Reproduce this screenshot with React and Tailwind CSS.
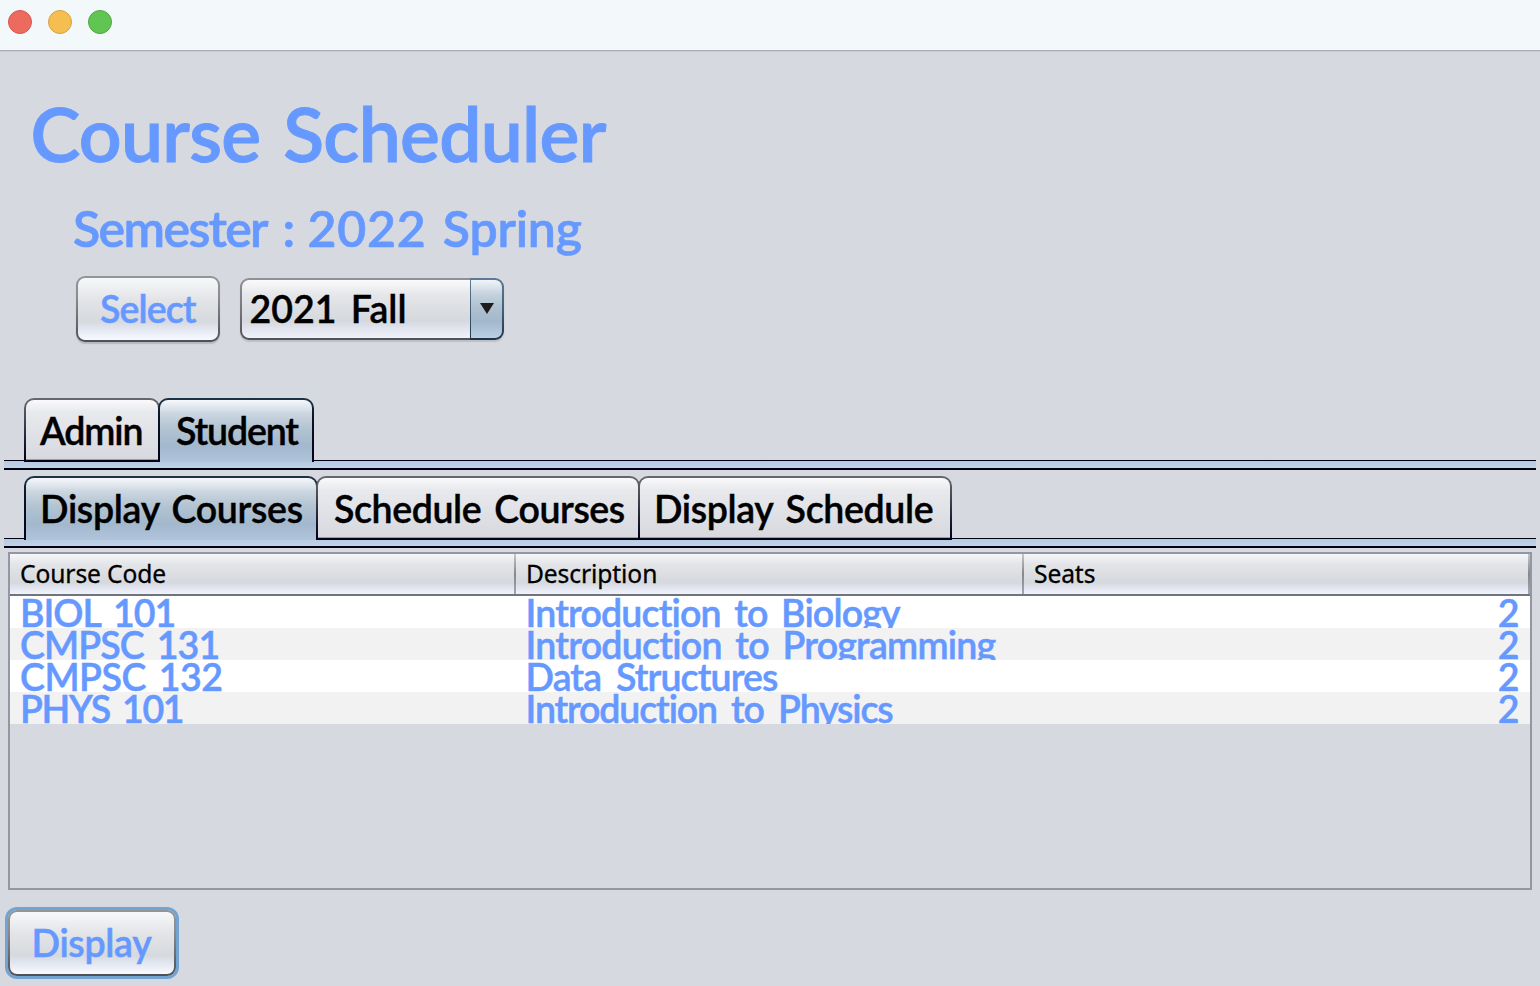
import React from "react";

const columns = [
  { label: "Course Code", width: "w-[506px]" },
  { label: "Description", width: "w-[508px]" },
  { label: "Seats", width: "w-[506px]" },
];

const courses = [
  { code: "BIOL 101", codeFit: "tracking-[-1px] [word-spacing:5px]", name: "Introduction to Biology", nameFit: "tracking-[-0.83px] [word-spacing:5px]", seats: 2 },
  { code: "CMPSC 131", codeFit: "tracking-[-0.9px] [word-spacing:4.5px]", name: "Introduction to Programming", nameFit: "tracking-[-0.75px] [word-spacing:5px]", seats: 2 },
  { code: "CMPSC 132", codeFit: "tracking-[-0.5px] [word-spacing:4px]", name: "Data Structures", nameFit: "tracking-[-0.9px] [word-spacing:6.5px]", seats: 2 },
  { code: "PHYS 101", codeFit: "tracking-[-1.3px] [word-spacing:4px]", name: "Introduction to Physics", nameFit: "tracking-[-1.15px] [word-spacing:6px]", seats: 2 },
];

function Tab({ selected, className, fit, children }) {
  const frame = selected
    ? "bg-[linear-gradient(#1d3348,#0c1426_30%,#000014)] pb-0"
    : "bg-[linear-gradient(#66686f,#55575f_20%,#15162a_75%,#000014)] pb-[2px]";
  const face = selected
    ? "bg-[linear-gradient(#f6f8fb,#cbd6e0_22%,#b3c4d2_45%,#a3b8cd_74%,#b0c5db)]"
    : "bg-[linear-gradient(#fafafc,#e8e9ec_20%,#e2e3e8_50%,#d8d9df_98%,#9c9ca6_98%)]";
  return (
    <button className={`h-16 shrink-0 rounded-t-[10px] px-[2px] pt-[2px] ${frame} ${className}`}>
      <span className={`flex h-full rounded-t-[8px] whitespace-pre text-left leading-[62px] text-black [-webkit-text-stroke:0.4px_#000] ${face} ${fit}`}>{children}</span>
    </button>
  );
}

function TabStrip({ children }) {
  return (
    <div className="mx-1 grid">
      <div className="col-start-1 row-start-1 mt-[62px] h-[10px] border-t border-b-2 border-[#000014] bg-[linear-gradient(#b5cade,#bfd4e8)]" />
      <div className="relative col-start-1 row-start-1 flex h-16 pl-5">{children}</div>
    </div>
  );
}

const buttonFrame = "bg-[linear-gradient(#939699,#8b8d90_30%,#4d5054)] p-[2px]";
const buttonFace = "bg-[linear-gradient(#f7f8fa,#e2e4e7_35%,#d6d9de_70%,#e2e6f0_82%,#f8faff)]";

export default function App() {
  return (
    <div className="flex h-[986px] w-[1540px] flex-col overflow-hidden bg-[#d6d9e0] font-['Lato',sans-serif] text-[37.5px] font-semibold text-[#6699ff]">
      <header className="flex h-[52px] shrink-0 gap-4 border-b border-[#c9ccd2] bg-[#f3f9fa] bg-[linear-gradient(#f3f9fa_50px,#abafb5_50px)] pt-[10px] pl-2">
        <span className="size-6 rounded-full border border-[#d9554c] bg-[#ec6a5e]" />
        <span className="size-6 rounded-full border border-[#d9a044] bg-[#f4bf50]" />
        <span className="size-6 rounded-full border border-[#4fa73f] bg-[#61c554]" />
      </header>

      <h1 className="mt-[41px] ml-[30.5px] h-20 text-[75px] leading-[80px] tracking-[-0.7px] whitespace-nowrap [-webkit-text-stroke:1px_#6699ff] [word-spacing:5px]">
        Course Scheduler
      </h1>
      <h2 className="mt-[25px] ml-[73px] h-[60px] text-[50px] leading-[60px] whitespace-nowrap [-webkit-text-stroke:0.7px_#6699ff]">
        <span className="tracking-[-1.6px]">Semester</span> <span className="ml-[3px]">:</span>{" "}
        <span className="tracking-[0.7px]">2022</span> <span className="ml-[4px] tracking-[-0.2px]">Spring</span>
      </h2>

      <div className="mt-[18px] ml-[76px] flex h-[67px] items-start gap-5">
        <button className={`h-[66px] w-36 rounded-[9px] shadow-[0_2px_1px_#b6b9bf] ${buttonFrame}`}>
          <span className={`flex h-full justify-start rounded-[7px] pl-[22px] leading-[61px] tracking-[-0.9px] [-webkit-text-stroke:0.5px_#6699ff] ${buttonFace}`}>Select</span>
        </button>
        <div className="mt-[2px] flex h-[62px] w-[264px] overflow-hidden rounded-[9px] shadow-[0_2px_1px_#bdc0c6]">
          <div className="h-full w-[230px] bg-[linear-gradient(#8f9098,#7c7d86_40%,#515259)] py-[2px] pl-[2px]">
            <div className="h-full rounded-l-[7px] bg-[linear-gradient(#fafafc,#e6e7ea_25%,#dcdee2_50%,#d5d8de_70%,#e0e2ec_82%,#f0f2fa)] pl-[7.5px] leading-[58px] whitespace-nowrap text-black [-webkit-text-stroke:0.4px_#000] [word-spacing:5px]">
              2021 Fall
            </div>
          </div>
          <div className="h-full w-[34px] bg-[linear-gradient(#5f7a94,#46607a_50%,#1d3348)] py-[2px] pr-[2px] pl-px">
            <div className="flex h-full items-center justify-center rounded-r-[7px] bg-[linear-gradient(#f0f5f9,#c3d2dd_25%,#aec1d0_48%,#a2b8cd_72%,#bcd0e5)]">
              <svg className="mb-px" width="14" height="11" viewBox="0 0 14 11">
                <path d="M0 0h14L7 11z" fill="#1c1c1e" />
              </svg>
            </div>
          </div>
        </div>
      </div>

      <div className="mt-[55px]">
        <TabStrip>
          <Tab className="w-[136px]" fit="pl-[14px] tracking-[-1.1px]">Admin</Tab>
          <Tab selected className="-ml-[2px] w-[156px]" fit="pl-[16px] tracking-[-1.15px]">Student</Tab>
        </TabStrip>
      </div>

      <div className="mt-[6px]">
        <TabStrip>
          <Tab selected className="w-[294px]" fit="pl-[14px] tracking-[-0.3px] [word-spacing:3.5px]">Display Courses</Tab>
          <Tab className="-ml-[2px] w-[324px]" fit="pl-[16px] tracking-[-0.4px] [word-spacing:4px]">Schedule Courses</Tab>
          <Tab className="-ml-[2px] w-[314px]" fit="pl-[14px] tracking-[-0.35px] [word-spacing:4px]">Display Schedule</Tab>
        </TabStrip>
      </div>

      <section className="mx-2 mt-1 h-[338px] shrink-0 border-2 border-[#9297a1]">
        <div className="flex h-[42px] border-b-2 border-[#70747d] bg-[linear-gradient(#f6f7fa,#e4e5e8_25%,#dcdee1_50%,#d5d8de_72%,#e2e5ef_85%,#f0f3fc)] font-['Noto_Sans',sans-serif] text-[24.6px] font-normal text-black">
          {columns.map((c) => (
            <div key={c.label} className={`flex h-full justify-between pl-[10px] leading-[39px] tracking-[-0.1px] [-webkit-text-stroke:0.3px_#000] ${c.width}`}>
              {c.label}
              <span className="h-10 w-[2px] bg-[linear-gradient(#c4c6ca,#84878d_50%,#a4a7ad)]" />
            </div>
          ))}
        </div>
        <div>
          {courses.map((c) => (
            <div key={c.code} className="flex h-8 overflow-hidden leading-[33px] whitespace-nowrap [-webkit-text-stroke:0.5px_#6699ff] odd:bg-white even:bg-[#f2f2f2]">
              <div className={`w-[506px] pl-[10px] ${c.codeFit}`}>{c.code}</div>
              <div className={`w-[508px] pl-[9.5px] ${c.nameFit}`}>{c.name}</div>
              <div className="w-[506px] pr-[10.5px] text-right">{c.seats}</div>
            </div>
          ))}
        </div>
      </section>

      <button className={`mt-5 ml-2 h-[66px] w-[168px] shrink-0 rounded-[9px] shadow-[0_0_0_3px_#73a4d1] ${buttonFrame}`}>
        <span className={`flex h-full rounded-[7px] pl-[21.5px] leading-[61px] tracking-[-0.3px] [-webkit-text-stroke:0.5px_#6699ff] ${buttonFace}`}>Display</span>
      </button>
    </div>
  );
}
